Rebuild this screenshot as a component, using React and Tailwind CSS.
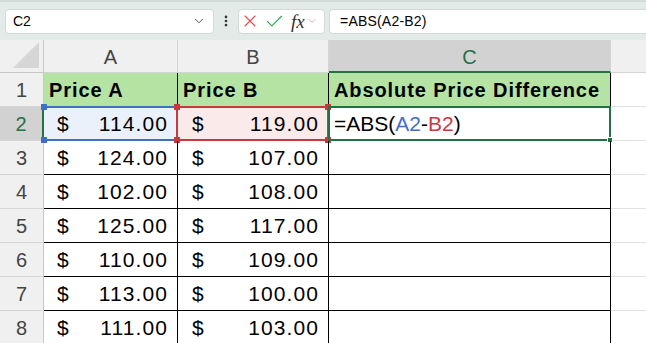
import { ChevronDown, EllipsisVertical, X, Check } from 'lucide-react';

const prices = [
  [114, 119],
  [124, 107],
  [102, 108],
  [125, 117],
  [110, 109],
  [113, 100],
  [111, 103],
];

const font = { fontFamily: '"Liberation Sans", Arial, sans-serif' };

const Money = ({ value }) => (
  <div className="flex h-full w-full items-center justify-between pl-[13px] pr-[9px] text-[21px] tracking-[1.1px] text-black">
    <span>$</span>
    <span>{value.toFixed(2)}</span>
  </div>
);

const Corner = ({ className }) => (
  <span className={`absolute h-[6px] w-[6px] ${className}`} />
);

export default function App() {
  return (
    <div className="h-[343px] w-[646px] overflow-hidden bg-white" style={font}>
      {/* formula bar */}
      <div className="flex h-[40px] items-center gap-[4px] border-t-2 border-[#d3dcd9] bg-[#e2ebe8] pl-[5px]">
        <div className="flex h-[25px] w-[209px] items-center justify-between rounded-[4px] border border-[#d2dad7] bg-white pl-[7px] pr-[7px] text-[14px] text-black">
          <span>C2</span>
          <ChevronDown size={14} strokeWidth={1.6} className="text-[#444]" />
        </div>
        <EllipsisVertical size={14} strokeWidth={2.6} className="mx-[1px] text-[#333]" />
        <div className="flex h-[25px] w-[87px] items-center rounded-[4px] border border-[#d2dad7] bg-white pl-[1px]">
          <X size={20} strokeWidth={1.3} className="text-[#e5484d]" />
          <Check size={21} strokeWidth={1.3} className="ml-[4px] text-[#3aa655]" />
          <span
            className="ml-[6px] text-[19px] italic leading-none text-[#333]"
            style={{ fontFamily: '"Liberation Serif", serif' }}
          >
            fx
          </span>
          <ChevronDown size={12} strokeWidth={1.4} className="ml-[1px] text-[#999]" />
        </div>
        <div className="flex h-[25px] flex-1 items-center rounded-l-[4px] border border-r-0 border-[#d2dad7] bg-white pl-[10px] text-[14px] tracking-[0.2px] text-black">
          =ABS(A2-B2)
        </div>
      </div>

      {/* column headers */}
      <div className="flex h-[33px] bg-[#f0f0f0] text-[20px] text-[#444]">
        <div className="relative w-[44px] border-r border-b border-[#c8c8c8]">
          <div
            className="absolute bottom-[4px] right-[4px] h-[26px] w-[26px] bg-[#d6d6d6]"
            style={{ clipPath: 'polygon(100% 0, 100% 100%, 0 100%)' }}
          />
        </div>
        <div className="flex w-[134px] items-center justify-center border-r border-b border-[#d4d4d4] pt-[2px]">A</div>
        <div className="flex w-[151px] items-center justify-center border-r border-b border-[#d4d4d4] pt-[2px]">B</div>
        <div className="flex w-[282px] items-center justify-center border-r border-b-2 border-[#d4d4d4] border-b-[#217346] bg-[#d2d2d2] pt-[2px] text-[#217346]">
          C
        </div>
        <div className="flex-1 border-b border-[#d4d4d4]" />
      </div>

      {/* row 1 */}
      <div className="flex h-[34px]">
        <div className="flex w-[44px] items-center justify-center border-r border-b border-[#d4d4d4] border-r-[#c8c8c8] bg-[#f0f0f0] text-[20px] text-[#444]">
          1
        </div>
        <div className="flex w-[134px] items-center border-r border-b border-black bg-[#b5e3a3] pl-[5px] text-[20px] font-bold tracking-[0.9px]">
          Price A
        </div>
        <div className="flex w-[151px] items-center border-r border-b border-black bg-[#b5e3a3] pl-[5px] text-[20px] font-bold tracking-[0.9px]">
          Price B
        </div>
        <div className="flex w-[282px] items-center border-r border-black bg-[#b5e3a3] pl-[5px] text-[20px] font-bold tracking-[0.9px]">
          Absolute Price Difference
        </div>
        <div className="flex-1 border-b border-[#e1e1e1]" />
      </div>

      {/* data rows */}
      {prices.map(([a, b], i) => {
        const sel = i === 0;
        return (
          <div key={i} className="flex h-[34px]">
            <div
              className={`flex w-[44px] items-center justify-center border-r border-b border-[#d4d4d4] text-[20px] ${
                sel ? 'border-r-2 border-r-[#217346] bg-[#d2d2d2] text-[#217346]' : 'border-r-[#c8c8c8] bg-[#f0f0f0] text-[#444]'
              }`}
            >
              {i + 2}
            </div>
            <div className={`relative w-[134px] border-r border-b border-black ${sel ? 'bg-[#ebf1fa]' : ''}`}>
              {sel && (
                <>
                  <div className="absolute -left-[1px] -top-[1px] -right-[1px] -bottom-[1px] border-y-2 border-[#3f6fc6]" />
                  <Corner className="-left-[3px] -top-[3px] bg-[#3f6fc6]" />
                  <Corner className="-left-[3px] -bottom-[3px] bg-[#3f6fc6]" />
                </>
              )}
              <Money value={a} />
            </div>
            <div className={`relative w-[151px] border-r border-b border-black ${sel ? 'bg-[#fbeaea]' : ''}`}>
              {sel && (
                <>
                  <div className="absolute -left-[2px] -top-[1px] -right-[1px] -bottom-[1px] border-2 border-[#c8393f]" />
                  <Corner className="-left-[4px] -top-[3px] bg-[#c8393f]" />
                  <Corner className="-left-[4px] -bottom-[3px] bg-[#c8393f]" />
                  <Corner className="-right-[3px] -top-[3px] bg-[#c8393f]" />
                  <Corner className="-right-[3px] -bottom-[3px] bg-[#c8393f]" />
                </>
              )}
              <div className="absolute inset-0 pl-[1px]">
                <Money value={b} />
              </div>
            </div>
            <div className="relative flex w-[282px] items-center border-r border-b border-black pl-[5px] text-[21px]">
              {sel && (
                <>
                  <div className="absolute -left-[1px] -top-[1px] -right-[1px] -bottom-[1px] border-2 border-[#217346]" />
                  <Corner className="-right-[3px] -bottom-[3px] border border-white bg-[#217346]" />
                  <span>=ABS(</span>
                  <span className="text-[#3f6fc6]">A2</span>
                  <span>-</span>
                  <span className="text-[#c8393f]">B2</span>
                  <span>)</span>
                </>
              )}
            </div>
            <div className="flex-1 border-b border-[#e1e1e1]" />
          </div>
        );
      })}
    </div>
  );
}
